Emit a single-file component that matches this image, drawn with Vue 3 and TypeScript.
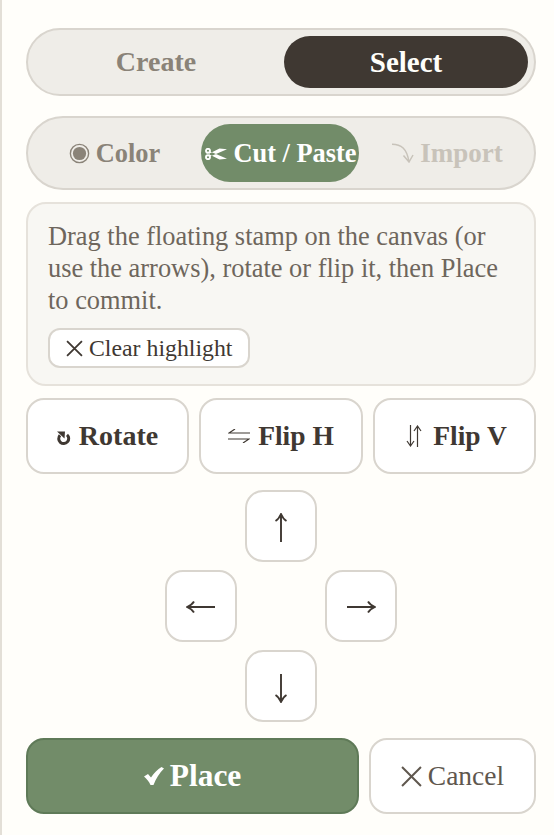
<script setup lang="ts">
const hint = 'Drag the floating stamp on the canvas (or use the arrows), rotate or flip it, then Place to commit.'
</script>

<template>
  <main class="panel">
    <div class="seg mode">
      <button class="seg-btn muted">Create</button>
      <button class="seg-btn dark">Select</button>
    </div>

    <div class="seg tool">
      <button class="tool-btn muted">
        <svg class="ic-color" viewBox="0 0 20 20"><circle cx="10" cy="10" r="8.7" fill="none" stroke="#8a8378" stroke-width="1.3"/><circle cx="10" cy="10" r="6.3" fill="#8a8378"/></svg>
        Color
      </button>
      <button class="tool-btn green">
        <svg class="ic-cut" viewBox="0 0 22 12"><g fill="none" stroke="#fff" stroke-width="1.900"><circle cx="3" cy="2.800" r="2"/><circle cx="3" cy="9.200" r="2"/></g><path d="M4.500 3.200 22 10.800 14.500 11.400 4 6.200zM4.500 8.800 22 1.200 14.500 .6 4 5.800z" fill="#fff"/></svg>
        Cut / Paste
      </button>
      <button class="tool-btn faint">
        <svg class="ic-import" viewBox="0 0 22 20"><path d="M0 1.200c9 0 15 4 17 17.800M11.500 12.500l5.500 6.500 4-7" fill="none" stroke="#c8c3ba" stroke-width="1.500"/></svg>
        Import
      </button>
    </div>

    <section class="hint">
      <p>{{ hint }}</p>
      <button class="clear">
        <svg class="ic-x" viewBox="0 0 16 16"><path d="M1 1l14 14M15 1 1 15" stroke="#3f3832" stroke-width="1.7" fill="none"/></svg>
        Clear highlight
      </button>
    </section>

    <div class="transforms">
      <button class="card-btn">
        <svg class="ic-rot" viewBox="0 0 14 15"><path d="M10 3.800A5 5 0 1 1 3 4.200" fill="none" stroke="#3f3832" stroke-width="3"/><path d="M0 .4H8L7.500 7.500z" fill="#3f3832"/></svg>
        Rotate
      </button>
      <button class="card-btn flip-h">
        <svg class="ic-flip" viewBox="0 0 22 14"><path d="M22 4H1l6-4M0 10h21l-6 4" fill="none" stroke="#3f3832" stroke-width="1.200"/></svg>
        Flip H
      </button>
      <button class="card-btn flip-v">
        <svg class="ic-flipv" viewBox="0 0 16 22"><path d="M4.500 0v21M1 16l3.500 5 3.500-5M11.500 22V1M8 6l3.500-5 3.500 5" fill="none" stroke="#3f3832" stroke-width="1.200"/></svg>
        Flip V
      </button>
    </div>

    <div class="pad">
      <button class="arrow up"><svg viewBox="0 0 30 30"><path d="M15 1v28M9.500 8c2.500-1.500 4-3.500 5.500-7 1.500 3.500 3 5.500 5.500 7" fill="none" stroke="#3f3832" stroke-width="1.900"/></svg></button>
      <button class="arrow left"><svg viewBox="0 0 30 30"><path d="M1 15h28M8 9.500C6.500 12 4.500 13.500 1 15c3.500 1.500 5.500 3 7 5.500" fill="none" stroke="#3f3832" stroke-width="1.900"/></svg></button>
      <button class="arrow right"><svg viewBox="0 0 30 30"><path d="M29 15H1M22 9.500c1.500 2.500 3.500 4 7 5.500-3.500 1.500-5.500 3-7 5.500" fill="none" stroke="#3f3832" stroke-width="1.900"/></svg></button>
      <button class="arrow down"><svg viewBox="0 0 30 30"><path d="M15 29V1M9.500 22c2.500 1.500 4 3.500 5.500 7 1.500-3.500 3-5.500 5.500-7" fill="none" stroke="#3f3832" stroke-width="1.900"/></svg></button>
    </div>

    <div class="actions">
      <button class="place">
        <svg class="ic-check" viewBox="0 0 20 18"><path d="M0 9.500 4 7 7 10.500C10 6 13.500 2.500 17.500 0L20 1.500C15.500 6 12 11.500 9.500 18H6.500C5 14.500 3 12 0 9.500z" fill="#fff"/></svg>
        Place
      </button>
      <button class="cancel">
        <svg class="ic-x2" viewBox="0 0 20 20"><path d="M1 1l18 18M19 1 1 19" stroke="#5f574e" stroke-width="1.900" fill="none"/></svg>
        Cancel
      </button>
    </div>
  </main>
</template>

<style scoped>
.panel {
  box-sizing: border-box;
  width: 554px;
  height: 835px;
  padding: 28px 18px 0 24px;
  border-left: 2px solid #e3dfd7;
  background: #fffefa;
  font-family: "Liberation Serif", "DejaVu Serif", serif;
  color: #3f3832;
  display: flex;
  flex-direction: column;
}
button {
  font-family: inherit;
  box-sizing: border-box;
  margin: 0;
  cursor: pointer;
}
svg { display: block; flex: none; }
.seg {
  box-sizing: border-box;
  display: flex;
  background: #efede8;
  border: 2px solid #d9d5ce;
  border-radius: 40px;
  padding: 6px;
}
.mode { height: 68px; gap: 6px; }
.seg-btn {
  flex: 1;
  border: 0;
  border-radius: 26px;
  font-size: 28px;
  font-weight: 700;
  background: transparent;
}
.mode .seg-btn { height: 52px; }
.muted { color: #8a8378; }
.dark { background: #3f3832; color: #fffefa; font-size: 29px; }
.tool { height: 74px; margin-top: 20px; align-items: stretch; gap: 0; padding-left: 6px; }
.tool-btn {
  display: flex;
  align-items: center;
  justify-content: center;
  gap: 6px;
  border: 0;
  background: transparent;
  font-size: 26.400px;
  font-weight: 700;
  border-radius: 30px;
  padding: 0;
  white-space: nowrap;
}
.tool-btn.muted { width: 167px; padding-right: 6px; }
.tool-btn.green { width: 158px; background: #728c69; color: #fff; padding-left: 2px; }
.tool-btn.faint { flex: 1; color: #c8c3ba; padding-left: 8px; font-size: 27px; }
.ic-color { width: 21px; height: 21px; }
.ic-cut { width: 22px; height: 12px; margin-top: 2px; }
.ic-import { width: 22px; height: 20px; }
.hint {
  box-sizing: border-box;
  margin-top: 12px;
  height: 184px;
  background: #f8f7f3;
  border: 2px solid #e6e2db;
  border-radius: 20px;
  padding: 16px 20px 0;
}
.hint p {
  margin: 0;
  font-size: 26.400px;
  line-height: 32px;
  color: #6e665c;
}
.clear {
  display: flex;
  align-items: center;
  gap: 6px;
  margin-top: 12px;
  height: 40px;
  width: 202px;
  padding: 0 0 0 16px;
  background: #fff;
  border: 2px solid #d9d5ce;
  border-radius: 12px;
  font-size: 23.800px;
  color: #3f3832;
  white-space: nowrap;
}
.ic-x { width: 17px; height: 17px; }
.transforms { display: grid; grid-template-columns: 163px 164px 163px; gap: 10px; margin-top: 12px; }
.card-btn {
  display: flex;
  align-items: center;
  justify-content: center;
  gap: 8px;
  height: 76px;
  background: #fff;
  border: 2px solid #d9d5ce;
  border-radius: 18px;
  font-size: 28px;
  font-weight: 700;
  color: #3f3832;
  padding: 0;
}
.flip-h, .flip-v { font-size: 27.500px; }
.flip-v { padding-left: 4px; }
.ic-rot { width: 14px; height: 15px; margin-top: 4px; }
.ic-flip { width: 22px; height: 14px; }
.ic-flipv { width: 16px; height: 22px; margin-right: 3px; }
.pad {
  display: grid;
  grid-template-columns: repeat(3, 72px);
  grid-template-rows: repeat(3, 72px);
  gap: 8px;
  justify-content: center;
  margin-top: 16px;
}
.arrow {
  display: flex;
  align-items: center;
  justify-content: center;
  background: #fff;
  border: 2px solid #d9d5ce;
  border-radius: 18px;
  padding: 0;
}
.arrow svg { width: 30px; height: 30px; }
.up { grid-area: 1 / 2; padding-top: 4px; }
.left { grid-area: 2 / 1; padding-top: 2px; }
.right { grid-area: 2 / 3; padding-top: 2px; }
.down { grid-area: 3 / 2; padding-top: 4px; }
.actions { display: flex; gap: 10px; margin-top: 16px; }
.place {
  display: flex;
  align-items: center;
  justify-content: center;
  gap: 6px;
  width: 333px;
  height: 76px;
  background: #728c69;
  border: 2px solid #5f7a58;
  border-radius: 18px;
  color: #fff;
  font-size: 31.500px;
  font-weight: 700;
  padding: 0;
}
.ic-check { width: 20px; height: 18px; }
.cancel {
  display: flex;
  align-items: center;
  justify-content: center;
  gap: 6px;
  flex: 1;
  height: 76px;
  background: #fff;
  border: 2px solid #d9d5ce;
  border-radius: 18px;
  color: #5f574e;
  font-size: 27.500px;
  padding: 0;
}
.ic-x2 { width: 21px; height: 21px; }
</style>
